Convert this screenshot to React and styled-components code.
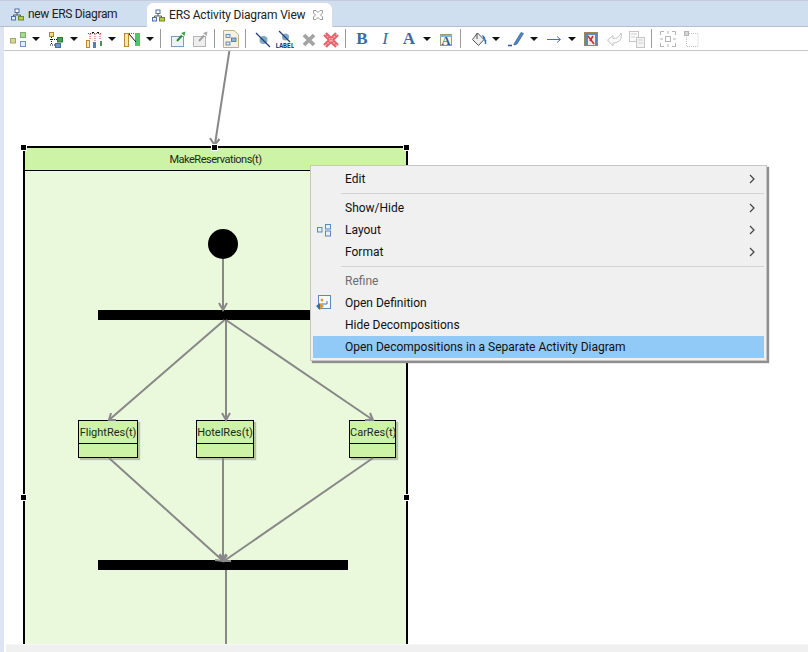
import React from "react";
import styled, { createGlobalStyle } from "styled-components";

const GlobalStyle = createGlobalStyle`
    html, body {
        margin: 0;
        padding: 0;
        background: #fff;
        overflow: hidden;
    }
    body {
        font-family: Roboto, "Noto Sans", "Liberation Sans", sans-serif;
        font-size: 12px;
        color: #1a1a1a;
    }
`;

const Page = styled.div`
    width: 808px;
    height: 652px;
    display: flex;
    flex-direction: column;
    overflow: hidden;
`;

/* tabs */
const TabBar = styled.div`
    height: 25px;
    flex: none;
    display: flex;
    align-items: flex-end;
    background: #cfdfef;
    border-top: 1px solid #c3cbdd;
    border-bottom: 1px solid #b5bdd3;
    padding-left: 4px;
`;

const Tab = styled.div`
    height: ${(p) => (p.$active ? "25px" : "24px")};
    width: ${(p) => p.$w}px;
    margin-bottom: ${(p) => (p.$active ? "-1px" : "0")};
    box-sizing: border-box;
    display: flex;
    align-items: center;
    padding-left: ${(p) => p.$pl}px;
    gap: 4px;
    white-space: nowrap;
    letter-spacing: ${(p) => (p.$active ? "-0.16px" : "-0.33px")};
    color: #222;
    background: ${(p) => (p.$active ? "#fff" : "transparent")};
    border-radius: 7px 7px 0 0;
    ${(p) => p.$active && "border: 1px solid #d4dbe8; border-bottom: none;"}
`;

const TabClose = styled.svg`
    width: 12px;
    height: 12px;
    margin-left: 3px;
    flex: none;
`;

/* everything under the tabs */
const Body = styled.div`
    flex: 1;
    min-height: 0;
    display: flex;
`;

const LeftStrip = styled.div`
    width: 4px;
    flex: none;
    background: #dfe4f4;
`;

const Main = styled.div`
    flex: 1;
    min-width: 0;
    display: flex;
    flex-direction: column;
`;

const Toolbar = styled.div`
    height: 24px;
    flex: none;
    display: flex;
    align-items: flex-start;
    padding: 3px 0 0 5px;
    box-sizing: border-box;
    background: #fff;
    border-bottom: 1px solid #c9c9c9;
`;

const Tool = styled.svg`
    width: 18px;
    height: 18px;
    flex: none;
    margin-left: ${(p) => p.$ml || 0}px;
`;

const TextTool = styled.span`
    width: 18px;
    height: 18px;
    flex: none;
    margin-left: ${(p) => p.$ml || 0}px;
    text-align: center;
    font-family: "Liberation Serif", serif;
    font-size: 17px;
    line-height: 18px;
    font-weight: ${(p) => (p.$italic ? 400 : 700)};
    font-style: ${(p) => (p.$italic ? "italic" : "normal")};
    color: #3a6ca3;
`;

const Drop = styled.span`
    width: 0;
    height: 0;
    flex: none;
    margin: 7px 1px 0 ${(p) => (p.$ml || 0) + 1}px;
    border-left: 4px solid transparent;
    border-right: 4px solid transparent;
    border-top: 4px solid #111;
`;

const Sep = styled.span`
    width: 1px;
    height: 19px;
    flex: none;
    margin-left: ${(p) => p.$ml || 5}px;
    margin-top: -1px;
    background: #9a9a9a;
`;

/* diagram canvas, nodes sit at their page coordinates */
const Canvas = styled.div`
    flex: 1;
    min-height: 0;
    position: relative;
    overflow: hidden;
    background: #fff;
`;

const Frame = styled.div`
    position: absolute;
    left: 19px;
    top: 95px;
    width: 385px;
    height: 700px;
    box-sizing: border-box;
    border: 2px solid #000;
    background: #eaf8dc;
`;

const FrameTitle = styled.div`
    height: 22px;
    border-bottom: 1px solid #000;
    background: #ccf3a6;
    text-align: center;
    font-size: 11px;
    letter-spacing: -0.5px;
    line-height: 23px;
    color: #1c2a1c;
`;

const Handle = styled.span`
    position: absolute;
    left: ${(p) => p.$x - 6}px;
    top: ${(p) => p.$y - 53}px;
    width: 5px;
    height: 5px;
    background: #000;
    outline: 1px solid #fff;
`;

const StartNode = styled.div`
    position: absolute;
    left: 204px;
    top: 178px;
    width: 30px;
    height: 30px;
    border-radius: 50%;
    background: #000;
`;

const ForkBar = styled.div`
    position: absolute;
    left: 94px;
    top: ${(p) => p.$y - 51}px;
    width: 250px;
    height: 10px;
    background: #000;
`;

const ClassBox = styled.div`
    position: absolute;
    left: ${(p) => p.$x - 4}px;
    top: 369px;
    width: ${(p) => p.$w}px;
    height: 38px;
    box-sizing: border-box;
    border: 1px solid #000;
    background: #ccf3a6;
    box-shadow: 2px 2px 1px #b4c4a4;
`;

const ClassName = styled.div`
    height: 22px;
    border-bottom: 1px solid #000;
    text-align: center;
    font-size: 11px;
    line-height: 23px;
    white-space: nowrap;
    color: #1c2a1c;
`;

const Wires = styled.svg`
    position: absolute;
    left: 0;
    top: 0;
    width: 804px;
    height: 594px;
`;

const ScrollBar = styled.div`
    height: 7px;
    flex: none;
    margin-left: 2px;
    background: #f0f0f0;
    position: relative;
    border-top: 1px solid #f6f6f6;
`;

/* context menu */
const Menu = styled.div`
    position: absolute;
    left: 306px;
    top: 114px;
    width: 457px;
    box-sizing: border-box;
    padding: 2px;
    background: #f0f0f0;
    border: 1px solid #c6c6c6;
    box-shadow: 2px 2px 1px #8f8f8f;
`;

const MenuRow = styled.div`
    height: 22px;
    display: flex;
    align-items: center;
    padding-left: 32px;
    position: relative;
    white-space: nowrap;
    color: ${(p) => (p.$disabled ? "#6d6d6d" : "#111")};
    background: ${(p) => (p.$selected ? "#91c9f7" : "transparent")};
`;

const MenuRule = styled.div`
    height: 1px;
    margin: 3px 0 3px 28px;
    background: #d2d2d2;
`;

const MenuIcon = styled.svg`
    position: absolute;
    left: 3px;
    top: 3px;
    width: 16px;
    height: 16px;
`;

const Chevron = styled.svg`
    position: absolute;
    right: 9px;
    top: 6px;
    width: 6px;
    height: 10px;
`;

const wires = [
    { d: "M229.5 50L215 144", head: "M210 138L214.5 145L219.5 139" },
    { d: "M223 259V309", head: "M219 303L223 310L227 303" },
    { d: "M224.5 320L109 420", head: "M111 413L109 420L116 420" },
    { d: "M226 320V419", head: "M222 413L226 420L230 413" },
    { d: "M226 320L373 420", head: "M365 420L373 420L370 413" },
    { d: "M109 458L222 560", head: "M215 560L223 561L220 554" },
    { d: "M223 458V560", head: "M219 555L223 561L227 555" },
    { d: "M373 458L224 561", head: "M226 554L223 561L231 561" },
    { d: "M226 570V645" },
];

const handles = [
    [23, 147],
    [214, 147],
    [406, 147],
    [23, 497],
    [406, 497],
];

const classes = [
    { name: "FlightRes(t)", x: 78, w: 60 },
    { name: "HotelRes(t)", x: 196, w: 58 },
    { name: "CarRes(t)", x: 349, w: 47 },
];

function MenuChevron() {
    return (
        <Chevron viewBox="0 0 6 10">
            <path d="M1 1L5 5L1 9" fill="none" stroke="#444" strokeWidth="1.2" />
        </Chevron>
    );
}

function TreeIcon() {
    return (
        <svg width="13" height="13" viewBox="0 0 13 13" style={{ flex: "none" }}>
            <rect x="4" y="1" width="4" height="3.5" fill="#fff" stroke="#4d6fa8" />
            <path d="M6 5V7M2.5 9V7H9.5V9" fill="none" stroke="#555" />
            <rect x="0.5" y="8.5" width="4" height="3.5" fill="#e4eefa" stroke="#4d6fa8" />
            <rect x="7.5" y="8.5" width="5" height="3.5" fill="#b9c94a" stroke="#6d8a22" />
        </svg>
    );
}

function App() {
    return (
        <Page>
            <GlobalStyle />
            <TabBar>
                <Tab $w={142} $pl={7}>
                    <TreeIcon />
                    new ERS Diagram
                </Tab>
                <Tab $active $w={187} $pl={5}>
                    <TreeIcon />
                    ERS Activity Diagram View
                    <TabClose viewBox="0 0 12 12">
                        <path
                            d="M1.5 1.5H4L6 3.5L8 1.5H10.5V4L8.5 6L10.5 8V10.5H8L6 8.5L4 10.5H1.5V8L3.5 6L1.5 4Z"
                            fill="#fff"
                            stroke="#9a9a9a"
                        />
                    </TabClose>
                </Tab>
            </TabBar>
            <Body>
                <LeftStrip />
                <Main>
                    <Toolbar>
                        <Tool viewBox="0 0 18 18">
                            <rect x="1.5" y="8.5" width="5" height="4.5" fill="#d6d88f" stroke="#a3a66d" />
                            <rect x="11.5" y="2.5" width="5" height="5" fill="#a9d88f" stroke="#82ad75" />
                            <rect x="11.5" y="11.5" width="5" height="5" fill="#e3eefa" stroke="#6f93c4" />
                        </Tool>
                        <Drop $ml={4} />
                        <Tool $ml={6} viewBox="0 0 18 18">
                            <rect x="2.5" y="2.5" width="4" height="4" fill="#f3dc92" stroke="#b0842a" />
                            <path d="M4.5 7V15M3 9.5H11M3 15H8" stroke="#111" strokeDasharray="1 1" fill="none" />
                            <rect x="10.5" y="7.5" width="5" height="4.5" fill="#4f9a55" stroke="#2f7a3a" />
                            <rect x="8.5" y="13.5" width="5" height="4" fill="#6a95cc" stroke="#3f6da5" />
                        </Tool>
                        <Drop $ml={4} />
                        <Tool $ml={6} viewBox="0 0 18 18">
                            <path d="M3 3.5H16M5 4V10M10 4V12M15 4V10" stroke="#d83a3a" strokeDasharray="1 1" fill="none" />
                            <path d="M7 2.5H9M12 2.5H14" stroke="#111" fill="none" />
                            <rect x="1.5" y="10.5" width="3" height="7" fill="#f6e7b0" stroke="#b88a2c" />
                            <rect x="8" y="12" width="3" height="6" fill="#4f7fbd" />
                            <rect x="15" y="11" width="2" height="5" fill="#4d8f55" />
                        </Tool>
                        <Drop $ml={4} />
                        <Tool $ml={6} viewBox="0 0 18 18">
                            <rect x="1.5" y="3.5" width="4" height="13" fill="#f6e7a8" stroke="#b88a2c" />
                            <rect x="12" y="3" width="5" height="13" fill="#4fc46a" />
                            <path d="M6 4L13 12" stroke="#111" fill="none" />
                            <path d="M6 3.5H12" stroke="#d83a3a" strokeDasharray="1 1" fill="none" />
                        </Tool>
                        <Drop $ml={4} />
                        <Sep />
                        <Tool $ml={8} viewBox="0 0 18 18">
                            <rect x="2.5" y="6.5" width="12" height="10" fill="#eaf2fb" stroke="#7c9cc8" />
                            <path d="M8 11L13 5.5" stroke="#2a8a3a" strokeWidth="2" />
                            <path d="M12 3L16.5 1.5L15.5 6Z" fill="#3aa64a" />
                        </Tool>
                        <Tool $ml={4} viewBox="0 0 18 18">
                            <rect x="2.5" y="6.5" width="12" height="10" fill="#eee" stroke="#b4b4b4" />
                            <path d="M8 11L13 5.5" stroke="#a0a0a0" strokeWidth="2" />
                            <path d="M12 3L16.5 1.5L15.5 6Z" fill="#a8a8a8" />
                        </Tool>
                        <Sep />
                        <Tool $ml={7} viewBox="0 0 18 18">
                            <path d="M1.5 0.5H12L16.5 4.5V17.5H1.5Z" fill="#f7f2df" stroke="#bfae82" />
                            <rect x="4" y="4.5" width="4" height="3" fill="#dbe8f8" stroke="#4d76ad" strokeWidth="0.8" />
                            <rect x="9.5" y="8" width="4.5" height="3.5" fill="#8fb2de" stroke="#3f6da5" strokeWidth="0.8" />
                            <rect x="4" y="12" width="4" height="3" fill="#dbe8f8" stroke="#4d76ad" strokeWidth="0.8" />
                        </Tool>
                        <Sep />
                        <Tool $ml={8} viewBox="0 0 18 18">
                            <circle cx="9.5" cy="10" r="4" fill="#7fa8c4" />
                            <path d="M2 3L16 17" stroke="#1e3f7a" strokeWidth="1.2" />
                        </Tool>
                        <Tool $ml={4} viewBox="0 0 18 18">
                            <circle cx="9.5" cy="7" r="3.5" fill="#7fa8c4" />
                            <path d="M3 1L14 12" stroke="#1e3f7a" strokeWidth="1.2" />
                            <text x="9" y="17.5" textAnchor="middle" fontFamily="Liberation Mono" fontWeight="700" fontSize="6.4" fill="#12306a">
                                LABEL
                            </text>
                        </Tool>
                        <Tool $ml={6} viewBox="0 0 18 18">
                            <path d="M4 5L14 15M14 5L4 15" stroke="#a3a3a3" strokeWidth="3.8" />
                        </Tool>
                        <Tool $ml={4} viewBox="0 0 18 18">
                            <path d="M3 4L15 16M15 4L3 16" stroke="#e8606a" strokeWidth="5" />
                            <path d="M3 4L15 16M15 4L3 16" stroke="#fbc4c4" strokeWidth="1.4" strokeDasharray="1.5 1.5" />
                        </Tool>
                        <Sep />
                        <TextTool $ml={7}>B</TextTool>
                        <TextTool $ml={5} $italic>I</TextTool>
                        <TextTool $ml={6}>A</TextTool>
                        <Drop $ml={4} />
                        <Tool $ml={5} viewBox="0 0 18 18">
                            <rect x="3.5" y="4.5" width="11" height="11" fill="#fdf6d8" stroke="#9a9a78" />
                            <rect x="3" y="5" width="12" height="2" fill="#7fb2e6" />
                            <text x="9" y="15" textAnchor="middle" fontFamily="Liberation Serif" fontWeight="700" fontSize="13" fill="#2f5f9a">
                                A
                            </text>
                        </Tool>
                        <Sep />
                        <Tool $ml={9} viewBox="0 0 18 18">
                            <path d="M7.5 3L14 9.5L8.5 15.5L2.5 9.5Z" fill="#eee" stroke="#555" />
                            <path d="M7 3V9" stroke="#555" />
                            <path d="M12 4.5C15 6 16 9 15.5 12L13.5 9.5Z" fill="#2f6fb0" />
                            <path d="M15.5 10V14" stroke="#2f6fb0" strokeWidth="1.5" />
                        </Tool>
                        <Drop $ml={3} />
                        <Tool $ml={6} viewBox="0 0 18 18">
                            <path d="M7 14L14 2.5L16.5 3.5L10 14L7 15Z" fill="#4f86c0" stroke="#2f5f9a" strokeWidth="0.7" />
                            <path d="M1 15.5H5" stroke="#2f5f9a" strokeWidth="1.6" />
                        </Tool>
                        <Drop $ml={4} />
                        <Tool $ml={6} viewBox="0 0 18 18">
                            <path d="M2 9.5H15M12 6.5L15.5 9.5L12 12.5" fill="none" stroke="#4a6ea5" />
                        </Tool>
                        <Drop $ml={4} />
                        <Tool $ml={5} viewBox="0 0 18 18">
                            <rect x="2.5" y="2.5" width="13" height="13" fill="#5f88b5" stroke="#8f8a5a" />
                            <rect x="6" y="5" width="7" height="10" fill="#f2ece4" />
                            <path d="M6 6L12 14M8 11L11 6" stroke="#c9303a" strokeWidth="1.6" />
                        </Tool>
                        <Tool $ml={6} viewBox="0 0 18 18">
                            <path d="M1.5 10L7 5.5V8.5C11 8.5 13 7 15 3C16.5 8 14 13 7 13V16Z" fill="#fafafa" stroke="#c4c4c4" />
                        </Tool>
                        <Tool $ml={4} viewBox="0 0 18 18">
                            <rect x="1.5" y="1.5" width="9" height="10" fill="#fafafa" stroke="#c6c6c6" />
                            <rect x="8.5" y="7.5" width="8" height="10" fill="#f4f4f4" stroke="#c6c6c6" />
                            <path d="M3 4H9M3 7H7M10 10H15M10 13H15" stroke="#d2d2d2" />
                        </Tool>
                        <Sep />
                        <Tool $ml={7} viewBox="0 0 18 18">
                            <path d="M1.5 5V1.5H5M13 1.5H16.5V5M16.5 13V16.5H13M5 16.5H1.5V13" fill="none" stroke="#b4b4b4" />
                            <rect x="6.5" y="6.5" width="5" height="5" fill="none" stroke="#b4b4b4" />
                            <path d="M9 1V4M9 14V17M1 9H4M14 9H17" stroke="#b4b4b4" />
                        </Tool>
                        <Tool $ml={5} viewBox="0 0 18 18">
                            <rect x="2.5" y="1.5" width="4" height="4" fill="#d6d6d6" stroke="#b4b4b4" />
                            <path d="M7 3.5H16V16.5H4.5V6" fill="none" stroke="#c4c4c4" strokeDasharray="1 1" />
                        </Tool>
                    </Toolbar>
                    <Canvas>
                        <Frame>
                            <FrameTitle>MakeReservations(t)</FrameTitle>
                        </Frame>
                        <StartNode />
                        <ForkBar $y={310} />
                        <ForkBar $y={560} />
                        {classes.map((c) => (
                            <ClassBox key={c.name} $x={c.x} $w={c.w}>
                                <ClassName>{c.name}</ClassName>
                            </ClassBox>
                        ))}
                        <Wires viewBox="4 51 804 594">
                            {wires.map((w) => (
                                <g key={w.d} fill="none" stroke="#888" strokeWidth="2">
                                    <path d={w.d} />
                                    {w.head && <path d={w.head} />}
                                </g>
                            ))}
                        </Wires>
                        {handles.map(([x, y]) => (
                            <Handle key={`${x}-${y}`} $x={x} $y={y} />
                        ))}
                        <Menu>
                            <MenuRow>
                                Edit
                                <MenuChevron />
                            </MenuRow>
                            <MenuRule />
                            <MenuRow>
                                Show/Hide
                                <MenuChevron />
                            </MenuRow>
                            <MenuRow>
                                <MenuIcon viewBox="0 0 16 16">
                                    <rect x="1.5" y="5.5" width="4.5" height="4.5" fill="#e6eef8" stroke="#5f86bd" />
                                    <rect x="9.5" y="2.5" width="5" height="4.5" fill="#e6eef8" stroke="#5f86bd" />
                                    <rect x="9.5" y="9" width="5" height="5" fill="#e6eef8" stroke="#5f86bd" />
                                </MenuIcon>
                                Layout
                                <MenuChevron />
                            </MenuRow>
                            <MenuRow>
                                Format
                                <MenuChevron />
                            </MenuRow>
                            <MenuRule />
                            <MenuRow $disabled>Refine</MenuRow>
                            <MenuRow>
                                <MenuIcon viewBox="0 0 16 16">
                                    <rect x="2.5" y="0.5" width="12" height="13" fill="#f7fafd" stroke="#5f86bd" />
                                    <circle cx="6" cy="5" r="1.5" fill="#d9a23a" />
                                    <path d="M5 9H11M11 6V9" stroke="#4d76ad" />
                                    <path d="M0 11L4 8V15Z" fill="#2f6fb0" />
                                    <path d="M8 11L4 8V15Z" fill="#e0962a" />
                                </MenuIcon>
                                Open Definition
                            </MenuRow>
                            <MenuRow>Hide Decompositions</MenuRow>
                            <MenuRow $selected>Open Decompositions in a Separate Activity Diagram</MenuRow>
                        </Menu>
                    </Canvas>
                    <ScrollBar />
                </Main>
            </Body>
        </Page>
    );
}

export default App;
